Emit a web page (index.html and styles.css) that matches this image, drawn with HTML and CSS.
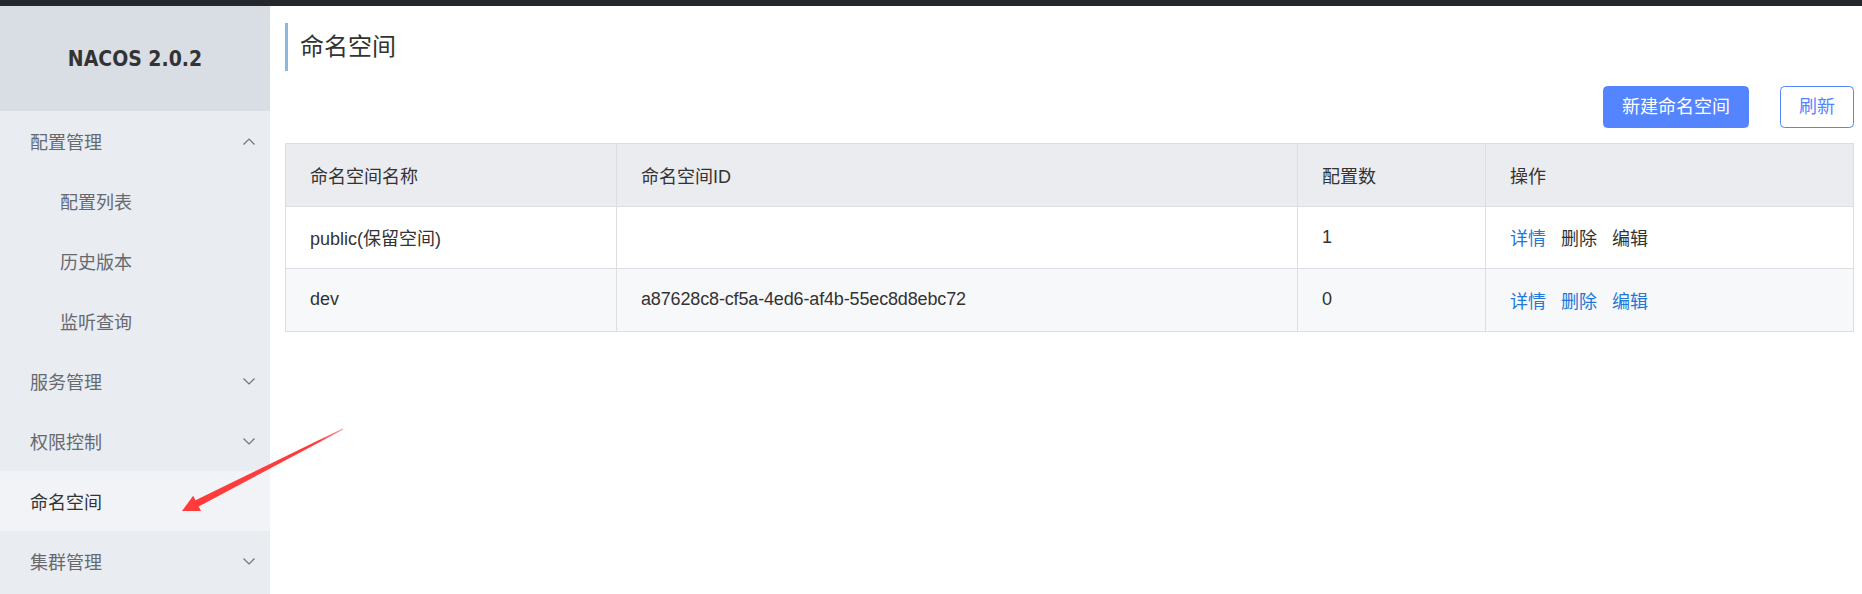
FILE: index.html
```html
<!DOCTYPE html>
<html lang="zh-CN">
<head>
<meta charset="utf-8">
<title>命名空间 - NACOS</title>
<link rel="stylesheet" href="styles.css">
</head>
<body>
<div class="topbar"></div>
<div class="layout">
  <aside class="sidebar">
    <div class="logo">NACOS 2.0.2</div>
    <nav class="menu">
      <div class="menu-item group">
        <span>配置管理</span>
        <svg class="chev" width="12" height="7" viewBox="0 0 12 7"><path d="M0.5 6.5 L6 1 L11.5 6.5" fill="none" stroke="#6f737a" stroke-width="1.2"/></svg>
      </div>
      <div class="menu-item sub">配置列表</div>
      <div class="menu-item sub">历史版本</div>
      <div class="menu-item sub">监听查询</div>
      <div class="menu-item group">
        <span>服务管理</span>
        <svg class="chev" width="12" height="7" viewBox="0 0 12 7"><path d="M0.5 0.5 L6 6 L11.5 0.5" fill="none" stroke="#6f737a" stroke-width="1.2"/></svg>
      </div>
      <div class="menu-item group">
        <span>权限控制</span>
        <svg class="chev" width="12" height="7" viewBox="0 0 12 7"><path d="M0.5 0.5 L6 6 L11.5 0.5" fill="none" stroke="#6f737a" stroke-width="1.2"/></svg>
      </div>
      <div class="menu-item group active"><span>命名空间</span></div>
      <div class="menu-item group">
        <span>集群管理</span>
        <svg class="chev" width="12" height="7" viewBox="0 0 12 7"><path d="M0.5 0.5 L6 6 L11.5 0.5" fill="none" stroke="#6f737a" stroke-width="1.2"/></svg>
      </div>
    </nav>
  </aside>
  <main class="main">
    <h1 class="page-title">命名空间</h1>
    <div class="toolbar">
      <button class="btn btn-primary">新建命名空间</button>
      <button class="btn btn-normal">刷新</button>
    </div>
    <table class="ns-table">
      <colgroup>
        <col class="c1"><col class="c2"><col class="c3"><col class="c4">
      </colgroup>
      <thead>
        <tr><th>命名空间名称</th><th>命名空间ID</th><th>配置数</th><th>操作</th></tr>
      </thead>
      <tbody>
        <tr>
          <td>public(保留空间)</td>
          <td></td>
          <td>1</td>
          <td class="ops"><a class="link">详情</a><span class="op-disabled">删除</span><span class="op-disabled">编辑</span></td>
        </tr>
        <tr class="alt">
          <td>dev</td>
          <td class="ns-id">a87628c8-cf5a-4ed6-af4b-55ec8d8ebc72</td>
          <td>0</td>
          <td class="ops"><a class="link">详情</a><a class="link">删除</a><a class="link">编辑</a></td>
        </tr>
      </tbody>
    </table>
  </main>
</div>
<svg class="annot" width="1862" height="594" viewBox="0 0 1862 594">
  <defs>
    <linearGradient id="fade" x1="343" y1="429" x2="182" y2="511" gradientUnits="userSpaceOnUse">
      <stop offset="0" stop-color="#ff4a4a" stop-opacity="0.5"/>
      <stop offset="0.15" stop-color="#ff3b3b"/>
      <stop offset="1" stop-color="#ff3b3b"/>
    </linearGradient>
  </defs>
  <polygon fill="url(#fade)" points="343.4,429.6 198.7,506.4 201,510.9 182,511 193.2,495.7 195.5,500.2 342.6,428.4"/>
</svg>
</body>
</html>
```

FILE: styles.css
```css
* { box-sizing: border-box; }
html, body { margin: 0; padding: 0; }
body {
  width: 1862px;
  height: 594px;
  overflow: hidden;
  background: #fff;
  font-family: "Liberation Sans", "Noto Sans CJK SC", sans-serif;
  font-size: 18px;
  color: #333;
  position: relative;
}
.topbar { height: 6px; background: #24272b; }
.layout { display: flex; height: 588px; }
.sidebar {
  width: 270px;
  flex: 0 0 270px;
  background: #e9ecf0;
  display: flex;
  flex-direction: column;
}
.logo {
  height: 105px;
  background: #d9dee4;
  display: flex;
  align-items: center;
  justify-content: center;
  font-family: "DejaVu Sans", sans-serif;
  font-weight: bold;
  font-stretch: condensed;
  font-size: 21px;
  color: #333;
}
.menu { display: flex; flex-direction: column; }
.menu-item {
  height: 60px;
  display: flex;
  align-items: center;
  justify-content: space-between;
  padding: 0 15px 0 30px;
  color: #666a70;
  font-size: 18px;
}
.menu-item.sub { padding-left: 60px; }
.menu-item.active { background: #f1f3f7; color: #333; }
.chev { display: block; }
.main {
  flex: 1;
  padding: 0 8px 0 15px;
  min-width: 0;
}
.page-title {
  margin: 17px 0 0 0;
  height: 48px;
  line-height: 48px;
  border-left: 3px solid #8cb8e0;
  padding-left: 12px;
  font-size: 24px;
  font-weight: normal;
  color: #333;
}
.toolbar {
  margin-top: 15px;
  display: flex;
  justify-content: flex-end;
  gap: 31px;
}
.btn {
  height: 42px;
  font-family: inherit;
  font-size: 18px;
  border-radius: 4.5px;
  border: 1px solid #5584ff;
  padding: 0 18px;
  cursor: pointer;
  line-height: 40px;
}
.btn-primary { background: #5584ff; color: #fff; padding: 0 18px; }
.btn-normal { background: #fff; color: #5584ff; }
.ns-table {
  margin-top: 15px;
  width: 100%;
  table-layout: fixed;
  border-collapse: collapse;
  border: 1px solid #dcdee3;
}
.c1 { width: 331px; }
.c2 { width: 681px; }
.c3 { width: 188px; }
.c4 { width: auto; }
.ns-table th, .ns-table td {
  border: 1px solid #dcdee3;
  height: 62.6px;
  padding: 0 24px;
  text-align: left;
  font-weight: normal;
  color: #333;
  font-size: 18px;
  white-space: nowrap;
}
.ns-table th { background: #ebecf0; }
.ns-table tr.alt td { background: #f7f8fa; }
.ns-id { letter-spacing: -0.15px; }
.ops a, .ops span { margin-right: 15px; }
.link { color: #2377d8; cursor: pointer; }
.op-disabled { color: #333; }
.annot { position: absolute; left: 0; top: 0; pointer-events: none; }
```
